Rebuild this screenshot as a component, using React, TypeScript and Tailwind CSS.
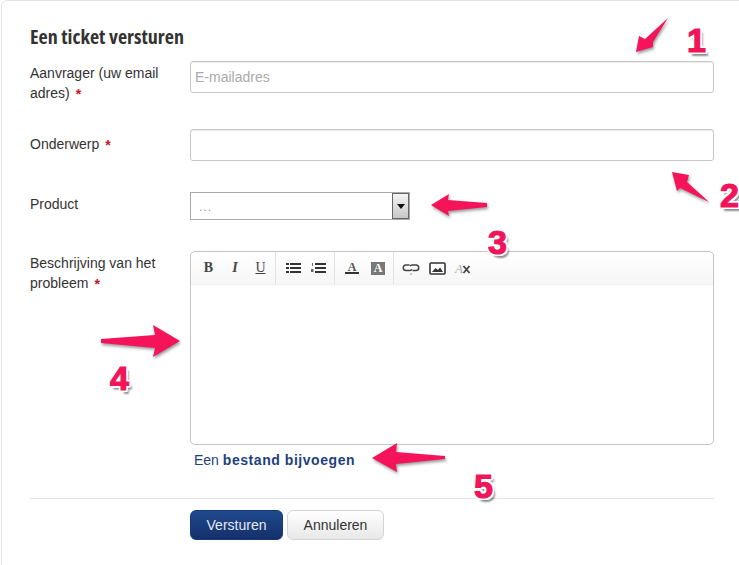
const Arrow = ({ points }: { points: string }) => (
  <polygon points={points} fill="#f5145a" style={{ filter: "drop-shadow(1px 2px 1.5px rgba(0,0,0,0.4))" }} />
);

const Num = ({ n, cls }: { n: string; cls: string }) => (
  <span
    className={`absolute text-[34px] leading-none font-bold text-[#f0145a] font-['Liberation_Sans',sans-serif] [-webkit-text-stroke:1.2px_#f0145a] [text-shadow:-2px_-2px_0_#fff,2px_-2px_0_#fff,-2px_2px_0_#fff,2px_2px_0_#fff,0_-2px_0_#fff,0_2px_0_#fff,-2px_0_0_#fff,2px_0_0_#fff,3px_4px_2px_rgba(0,0,0,0.45)] ${cls}`}
  >
    {n}
  </span>
);

const Req = () => <span className="inline-block ml-[6px] translate-y-[1px] text-[#c4161c] font-bold">*</span>;

const Toolbar = () => (
  <div className="flex h-[33px] border-b border-[#efefef] bg-gradient-to-b from-white to-[#f6f6f6] rounded-t-[5px]">
    <div className="flex items-center w-[85px] pl-[4px] border-r border-[#e2e2e2] font-['Liberation_Serif',serif] font-bold text-[#444] text-[14px]">
      <span className="w-[27px] text-center">B</span>
      <span className="w-[26px] text-center italic">I</span>
      <span className="w-[25px] text-center underline font-normal">U</span>
    </div>
    <div className="flex items-center w-[59px] pl-[10px] gap-[10px] border-r border-[#e2e2e2]">
      <svg width="15" height="10" viewBox="0 0 15 10" fill="#333">
        <rect x="0" y="0" width="3" height="2" /><rect x="4" y="0" width="11" height="2" />
        <rect x="0" y="4" width="3" height="2" /><rect x="4" y="4" width="11" height="2" />
        <rect x="0" y="8" width="3" height="2" /><rect x="4" y="8" width="11" height="2" />
      </svg>
      <svg width="15" height="10" viewBox="0 0 15 10" fill="#333">
        <rect x="1" y="0" width="1" height="3" fill="#666" /><rect x="0" y="6" width="2.5" height="3" fill="#666" />
        <rect x="4" y="0" width="11" height="2" /><rect x="4" y="4" width="11" height="2" /><rect x="4" y="8" width="11" height="2" />
      </svg>
    </div>
    <div className="flex items-center w-[59px] pl-[10px] gap-[12px] border-r border-[#e2e2e2]">
      <svg width="14" height="14" viewBox="0 0 14 14" className="overflow-visible">
        <text x="7" y="10" textAnchor="middle" fontSize="12" fontWeight="bold" fill="#555" fontFamily="Liberation Serif, serif">A</text>
        <rect x="0" y="11" width="14" height="2" fill="#333" />
      </svg>
      <div className="w-[14px] h-[13px] bg-[#777] flex items-center justify-center text-white text-[12px] leading-none font-bold font-['Liberation_Serif',serif]">A</div>
    </div>
    <div className="flex items-center pl-[8px] gap-[9px]">
      <svg width="18" height="14" viewBox="0 0 18 14" fill="none" stroke="#444" strokeWidth="1.5">
        <path d="M7.5 4H4a2.7 2.7 0 0 0 0 5.5h4a2.7 2.7 0 0 0 2-1.2" />
        <path d="M10.5 9.5H14a2.7 2.7 0 0 0 0-5.5h-4a2.7 2.7 0 0 0-2 1.2" />
        <path d="M8 13h2" stroke="#999" strokeWidth="1" />
      </svg>
      <svg width="17" height="13" viewBox="0 0 17 13">
        <rect x="1" y="1" width="15" height="11" rx="1" fill="#fff" stroke="#333" strokeWidth="1.6" />
        <path d="M3 10l3.5-4 2.5 2 2-2.5 3 4.5z" fill="#333" />
      </svg>
      <svg width="17" height="13" viewBox="0 0 17 13" className="overflow-visible">
        <text x="0" y="11" fontSize="13" fontStyle="italic" fill="#aaa" fontFamily="Liberation Serif, serif">A</text>
        <path d="M8.5 4l6 7M14.5 4l-6 7" stroke="#444" strokeWidth="1.8" />
      </svg>
    </div>
  </div>
);

export default function App() {
  return (
    <div className="relative w-[739px] h-[565px] overflow-hidden bg-white font-['Liberation_Sans',sans-serif] text-[14px] leading-5 text-[#333]">
      <div className="h-[575px] ml-[1px] border-l border-t border-[#e4e4e4] rounded-tl-[6px] pl-[28px] pt-[25px]">
        <h1 className="h-[22px] mb-[13px] text-[20px] leading-[22px] font-bold text-[#333] font-['Open_Sans',sans-serif] whitespace-nowrap [font-stretch:75%]">
          Een ticket versturen
        </h1>

        <div className="flex h-[68px]">
          <label className="w-[160px] pt-[2px] pr-4">Aanvrager (uw email adres)<Req /></label>
          <input
            placeholder="E-mailadres"
            className="w-[524px] h-[32px] px-[4px] border border-[#c8c8c8] rounded-[3px] shadow-[inset_0_1px_1px_rgba(0,0,0,0.08)] text-[14px] placeholder:text-[#aaa] outline-none"
          />
        </div>

        <div className="flex h-[63px]">
          <label className="w-[160px] pt-[5px]">Onderwerp<Req /></label>
          <input className="w-[524px] h-[32px] px-[5px] border border-[#c8c8c8] rounded-[3px] shadow-[inset_0_1px_1px_rgba(0,0,0,0.08)] outline-none" />
        </div>

        <div className="flex h-[59px]">
          <label className="w-[160px] pt-[2px]">Product</label>
          <div className="flex w-[220px] h-[28px] border border-[#aaa]">
            <span className="flex-1 pl-[8px] pt-[4px] text-[#999] text-[12px] tracking-[1px]">...</span>
            <span className="w-[17px] h-[26px] flex items-center justify-center border border-[#666] bg-gradient-to-b from-[#f4f4f4] to-[#c8c8c8]">
              <svg width="8" height="5" viewBox="0 0 8 5"><path d="M0 0h8L4 5z" fill="#111" /></svg>
            </span>
          </div>
        </div>

        <div className="flex h-[212px]">
          <label className="w-[160px] pt-[2px] pr-4">Beschrijving van het probleem<Req /></label>
          <div className="w-[524px] h-[194px] border border-[#c4c4c4] rounded-[5px]">
            <Toolbar />
          </div>
        </div>

        <div className="ml-[164px] h-[48px] -mt-[13px] text-[#1f3f7f] whitespace-nowrap">
          Een <span className="font-bold tracking-[0.55px]">bestand bijvoegen</span>
        </div>

        <div className="w-[684px] border-t border-[#e3e3e3] pt-[11px] pl-[160px] flex gap-[4px]">
          <button className="w-[93px] h-[30px] rounded-[6px] border border-[#153a78] bg-gradient-to-b from-[#1f4a8e] to-[#14306a] text-[#e6e9f0]">
            Versturen
          </button>
          <button className="w-[97px] h-[30px] rounded-[6px] border border-[#d4d4d4] bg-gradient-to-b from-white to-[#e8e8e8] text-[#333]">
            Annuleren
          </button>
        </div>
      </div>

      <svg className="absolute left-0 top-0 pointer-events-none" width="739" height="565">
        <Arrow points="636,52 639,36 645,39 668,18 653,42 653,47" />
        <Arrow points="672,172 689,175 687,182 709,202 680,188 677,191" />
        <Arrow points="431,205 449,194 448,200 487,203 487,207 448,211 449,216" />
        <Arrow points="180,341 153,325 155,335 101,339 101,343 155,348 153,357" />
        <Arrow points="372,458 397,443 396,452 445,456 445,459 396,464 397,472" />
      </svg>
      <Num n="1" cls="left-[687px] top-[23px]" />
      <Num n="2" cls="left-[720px] top-[178px]" />
      <Num n="3" cls="left-[488px] top-[225px]" />
      <Num n="4" cls="left-[110px] top-[361px]" />
      <Num n="5" cls="left-[474px] top-[469px]" />
    </div>
  );
}
